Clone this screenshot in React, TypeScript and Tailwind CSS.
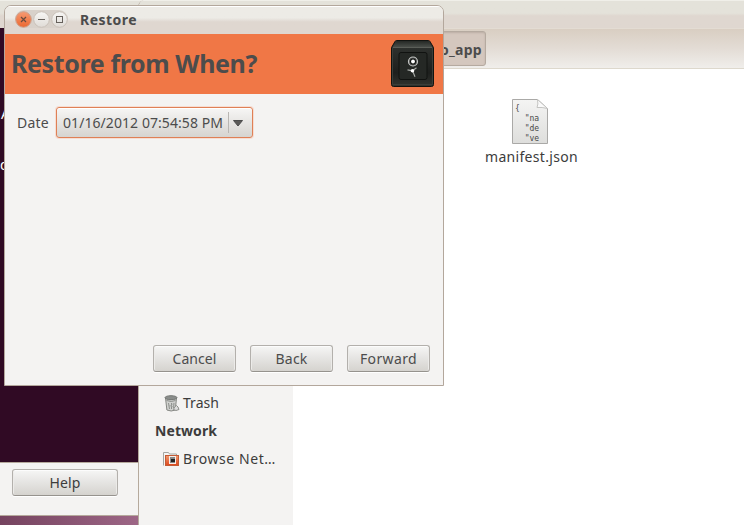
import React from "react";

function Label({ text, width, className = "" }: { text: string; width: number; className?: string }) {
  const ref = React.useRef<HTMLSpanElement>(null);
  const [spacing, setSpacing] = React.useState(0);
  React.useLayoutEffect(() => {
    if (ref.current) setSpacing((width - ref.current.getBoundingClientRect().width) / text.length);
  }, [text, width]);
  return (
    <span className={`block shrink-0 ${className}`} style={{ width }}>
      <span ref={ref} className="inline-block whitespace-nowrap" style={{ letterSpacing: spacing }}>{text}</span>
    </span>
  );
}

function Button({ text, textWidth, className = "w-[83px]" }: { text: string; textWidth: number; className?: string }) {
  return (
    <button className={`flex h-[27px] shrink-0 items-center justify-center rounded-[3px] border border-[#b3b0ac] border-b-[#96938e] bg-linear-to-b from-[#f6f6f5] via-[#e5e4e2] to-[#d5d3cf] shadow-[inset_0_1px_0_#fcfcfc,inset_1px_0_0_#ecebe9,inset_-1px_0_0_#ecebe9,0_1px_0_#fff] ${className}`}>
      <Label text={text} width={textWidth} className="leading-[20px]" />
    </button>
  );
}

function Safe() {
  return (
    <svg width="46" height="50" viewBox="0 0 46 50" className="shrink-0">
      <defs>
        <linearGradient id="safeTop" x2="0" y2="1"><stop stopColor="#252825" /><stop offset="1" stopColor="#4c504b" /></linearGradient>
        <linearGradient id="safeBody" x2="0" y2="1"><stop stopColor="#323532" /><stop offset=".7" stopColor="#1d1f1d" /><stop offset="1" stopColor="#31342f" /></linearGradient>
      </defs>
      <path d="M6.500 1.500h32q1 0 1.500 1l3.500 6v37q0 2-2 2h-38q-2 0-2-2v-37l3.500-6q.5-1 1.500-1z" fill="url(#safeBody)" stroke="#111310" />
      <path d="M6.500 2h32l4 6.500H2.500z" fill="url(#safeTop)" />
      <path d="M3 8.500h39" stroke="#5b5e58" />
      <path d="M2.500 9v36.500h40V9" fill="none" stroke="#3b3e39" />
      <rect x="9" y="13.500" width="28" height="27" rx="2" fill="#252825" stroke="#101210" />
      <circle cx="23" cy="22.500" r="4.500" fill="#4b4d4b" stroke="#c5c7c5" strokeWidth="1.200" />
      <circle cx="23" cy="22.500" r="3" fill="#101210" />
      <circle cx="23" cy="22.500" r="1.900" fill="#fff" />
      <path d="M22.500 31.800l-5-1M22.500 31.800l4-3M22.500 31.800l2.500 6" stroke="#a5a8a4" strokeWidth="1.200" />
      <circle cx="22.500" cy="31.800" r="1.800" fill="#fff" />
    </svg>
  );
}

function TrashIcon() {
  return (
    <svg width="16" height="17" viewBox="0 0 16 17" className="shrink-0">
      <path d="M1.500 3h11l-1.200 12q-4 2-8.400 0z" fill="#d0d1cf" stroke="#858783" />
      <ellipse cx="7" cy="2.700" rx="6" ry="2" fill="#8a8d8b" stroke="#737673" />
      <path d="M2.500 5.500q5 2 9 0M4.500 8l1 6M7.500 8v6M10 8l-.5 5" fill="none" stroke="#8c8f8c" />
      <path d="M4 10l6 2M10 8l-5 4" fill="none" stroke="#a5a7a4" strokeWidth=".7" />
      <path d="M10.500 12l2-1.500 1.500 1.500 1 2.500-3 1-2.500-1z" fill="#ddd" stroke="#8c8e8a" />
    </svg>
  );
}

function NetworkFolder() {
  return (
    <svg width="17" height="16" viewBox="0 0 17 16" className="shrink-0">
      <defs><linearGradient id="folder" x2="0" y2="1"><stop stopColor="#f19a72" /><stop offset="1" stopColor="#dd471b" /></linearGradient></defs>
      <path d="M.5 14.500V1.500h5l1 1.500h7v2" fill="#f5f5f4" stroke="#a4a5a2" />
      <rect x="2.500" y="4.500" width="13" height="10" fill="url(#folder)" stroke="#c35a35" />
      <rect x="6" y="5" width="7" height="8" fill="#f6eeea" />
      <rect x="7" y="6" width="5" height="6" fill="#888" />
      <rect x="8" y="8" width="4" height="3" fill="#222" />
    </svg>
  );
}

function FileIcon() {
  return (
    <div className="relative h-[47px] w-[37px]">
      <svg width="37" height="47" viewBox="0 0 37 47" className="block">
        <defs><linearGradient id="paper" x2="0" y2="1"><stop stopColor="#f4f4f3" /><stop offset="1" stopColor="#dededc" /></linearGradient></defs>
        <path d="M.5 1.500h25l10 9v35H.5z" fill="url(#paper)" stroke="#aaa9a7" />
        <path d="M25.500 1.500q1 5-.5 8 5-.5 10.500 1z" fill="#fafafa" stroke="#c4c4c2" />
      </svg>
      <pre className="absolute left-[3px] top-[6px] font-['DejaVu_Sans_Mono',monospace] text-[8px] leading-[10px] text-[#494949]">{'{\n  "na\n  "de\n  "ve'}</pre>
    </div>
  );
}

function FileManager() {
  return (
    <section className="absolute left-[138px] top-0 h-[525px] w-[606px] overflow-hidden rounded-tl-[7px] border-l border-[#b5a99c] bg-white">
      <div className="h-[28px] border-t border-[#f0efe9] bg-linear-to-b from-[#e4e2da] from-45% to-[#dfd7d0] to-55%" />
      <div className="h-[41px] border-b border-t border-[#ddd8cd] border-t-[#e3dcd3] bg-linear-to-b from-[#d9cec2] via-[#e3dcd5] to-[#f0eeeb] pt-[2px]">
        <div className="ml-[277px] flex h-[35px] w-[70px] items-center justify-end rounded-[3px] border border-[#b5aaa0] bg-[#d4c7be] pr-[3px] pt-[2px] shadow-[inset_0_1px_2px_#bbaea4]">
          <Label text="o_app" width={42} className="font-bold text-[#4c4c4c]" />
        </div>
      </div>
      <div className="flex h-[456px]">
        <aside className="flex w-[154px] shrink-0 flex-col bg-[#f4f3f2] pl-[16px] pt-[320px]">
          <div className="flex h-[28px] items-center gap-[3px] pl-[9px]"><TrashIcon /><Label text="Trash" width={36} /></div>
          <div className="flex h-[28px] items-center"><Label text="Network" width={62} className="font-bold" /></div>
          <div className="flex h-[28px] items-center gap-[3px] pl-[8px]"><NetworkFolder /><Label text="Browse Net…" width={93} /></div>
        </aside>
        <main className="flex-1 pl-[192px] pt-[29px]">
          <div className="flex w-[93px] flex-col items-start"><div className="ml-[27px]"><FileIcon /></div><Label text="manifest.json" width={93} className="mt-[1px] leading-[22px]" /></div>
        </main>
      </div>
    </section>
  );
}

function RestoreDialog() {
  return (
    <section className="absolute left-[4px] top-[5px] flex h-[381px] w-[440px] flex-col overflow-hidden rounded-t-[7px] border border-[#b3a79c] bg-[#f4f3f2] text-[#4c4c4c]">
      <header className="flex h-[28px] shrink-0 items-start gap-[3px] border-t border-white bg-linear-to-b from-[#edebe6] from-40% to-[#dfd7d0] to-55% pl-[10px] pt-[3px]">
        <svg width="55" height="19" viewBox="0 0 55 19" className="shrink-0">
          <defs>
            <linearGradient id="close" x2="0" y2="1"><stop stopColor="#f69a73" /><stop offset="1" stopColor="#eb682f" /></linearGradient>
            <linearGradient id="control" x2="0" y2="1"><stop stopColor="#f8f7f5" /><stop offset="1" stopColor="#dfdbd6" /></linearGradient>
          </defs>
          <rect x="0" y="0" width="53" height="18" rx="9" fill="#d8d1ca" />
          <circle cx="8.500" cy="9.500" r="7.800" fill="url(#close)" stroke="#cfa18c" />
          <path d="M6 7l5 5m0-5l-5 5" stroke="#674b3e" strokeWidth="1.200" />
          <circle cx="26.500" cy="9.500" r="7.800" fill="url(#control)" stroke="#c9c1b9" />
          <path d="M23 9.500h7" stroke="#66615c" />
          <circle cx="44.500" cy="9.500" r="7.800" fill="url(#control)" stroke="#c9c1b9" />
          <rect x="41.500" y="6.500" width="6" height="6" fill="none" stroke="#66615c" />
        </svg>
        <Label text="Restore" width={57} className="ml-[7px] font-bold" />
      </header>
      <div className="flex h-[60px] shrink-0 items-center justify-between bg-[#f07746] pl-[6px] pr-[7px]">
        <Label text="Restore from When?" width={246} className="pb-[2px] text-[25px] font-bold leading-[40px]" />
        <Safe />
      </div>
      <div className="flex flex-1 flex-col justify-between pb-[13px] pl-[12px] pr-[13px] pt-[13px]">
        <div className="flex items-center gap-[7px]">
          <Label text="Date" width={32} />
          <button className="flex h-[31px] w-[197px] items-center rounded-[3px] border border-[#df8056] bg-linear-to-b from-[#f7f6f5] to-[#d6d4d0] pl-[6px] shadow-[0_0_0_1px_#f6ddd2,inset_0_1px_0_#fff]">
            <Label text="01/16/2012 07:54:58 PM" width={160} className="text-left" />
            <span className="ml-[5px] h-[21px] w-px bg-[#b9b6b2]" />
            <svg width="10" height="7" viewBox="0 0 10 7" className="ml-[4px] mt-px"><path d="M.5.500h9L5 6z" fill="#5b5a58" stroke="#4c4c4c" /></svg>
          </button>
        </div>
        <div className="flex justify-end gap-[14px]">
          <Button text="Cancel" textWidth={44} />
          <Button text="Back" textWidth={32} />
          <Button text="Forward" textWidth={57} />
        </div>
      </div>
    </section>
  );
}

export default function App() {
  return (
    <div className="relative h-[525px] w-[744px] overflow-hidden bg-[#300a24] font-['Noto_Sans','Open_Sans',sans-serif] text-[14px] leading-[20px] text-[#3c3c3c]">
      <div className="absolute left-0 top-0 h-[28px] w-[744px] border-t border-[#f0efe9] bg-linear-to-b from-[#e4e2da] from-45% to-[#dfd7d0] to-55%" />
      <span className="absolute left-[1px] top-[104px] text-white">A</span>
      <span className="absolute left-0 top-[155px] text-white">d</span>
      <section className="absolute left-0 top-[462px] h-[54px] w-[138px] border-y border-[#b5a99c] bg-[#f4f3f2] pl-[12px] pt-[6px]">
        <Button text="Help" textWidth={31} className="w-[106px]" />
      </section>
      <div className="absolute left-0 top-[516px] h-[9px] w-[138px] bg-linear-to-r from-[#75435f] to-[#9d6686]" />
      <FileManager />
      <RestoreDialog />
    </div>
  );
}
